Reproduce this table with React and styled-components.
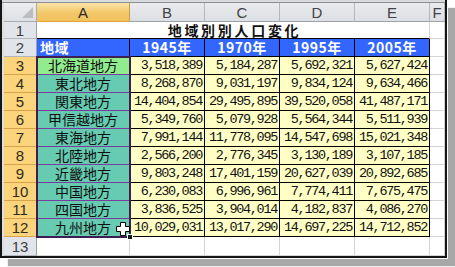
import React from "react";
import styled, { createGlobalStyle, css } from "styled-components";

const Global = createGlobalStyle`
  html, body { margin: 0; padding: 0; background: #fff; }
  #root { width: 455px; height: 267px; overflow: hidden; }
`;

const Shadow = styled.div`
  width: 447px;
  height: 258px;
  box-sizing: border-box;
  box-shadow: 1px 1px 0 #fff, 8px 8px 1px #a8a8a8;
  background: #fff;
  border-left: 2px solid #141414;
  border-right: 2px solid #141414;
  border-bottom: 2px solid #141414;
  display: flex;
  flex-direction: column;
`;

const TopStrip = styled.div`
  height: 2px;
  background: #d8dadd;
  border-bottom: 1px solid #8c8f94;
`;

const Body = styled.div`
  display: flex;
  flex: 1;
`;

const Gutter = styled.div`
  width: 2px;
  background: #dcdee2;
`;

const Sheet = styled.div`
  position: relative;
  display: grid;
  grid-template-columns: 33px 93px 75px 75px 75px 75px 15px;
  grid-template-rows: 19px 17px 18px repeat(10, 18px) 19px;
  font-family: "Noto Sans CJK JP", "Liberation Sans", sans-serif;
`;

const cellBase = css`
  box-sizing: border-box;
  border-right: 1px solid ${(p) => p.$br || "#d4d4d4"};
  border-bottom: 1px solid ${(p) => p.$bb || "#d4d4d4"};
  display: flex;
  align-items: center;
  white-space: nowrap;
  line-height: 15px;
  min-width: 0;
`;

const Corner = styled.div`
  ${cellBase};
  position: relative;
  background: linear-gradient(#eceef1, #dde0e4);
  border-color: #a9adb3;
  &::after {
    content: "";
    position: absolute;
    right: 3px;
    bottom: 3px;
    width: 0;
    height: 0;
    border-left: 11px solid transparent;
    border-bottom: 11px solid #b9bcc1;
  }
`;

const ColHeader = styled.div`
  ${cellBase};
  justify-content: center;
  font-family: "Liberation Sans", "DejaVu Sans", sans-serif;
  font-size: 15px;
  color: ${(p) => (p.$active ? "#2a2a2a" : "#404347")};
  border-right-color: ${(p) => (p.$active ? "#c9a04f" : "#b3b7bd")};
  border-bottom-color: ${(p) => (p.$active ? "#e1a43a" : "#9da2a9")};
  background: ${(p) =>
    p.$active
      ? "linear-gradient(#f9e3a6, #f3c869 55%, #f1c15c)"
      : "linear-gradient(#e9ebee, #dcdfe3)"};
`;

const RowHeader = styled.div`
  ${cellBase};
  justify-content: center;
  font-family: "Liberation Sans", "DejaVu Sans", sans-serif;
  font-size: 15px;
  color: ${(p) => (p.$active ? "#2e2a1e" : "#3c3f44")};
  border-right-color: ${(p) => (p.$active ? "#e0a53f" : "#9da2a9")};
  border-bottom-color: ${(p) => (p.$active ? "#d9a14a" : "#b3b7bd")};
  background: ${(p) => (p.$active ? "#fbd47b" : "#e1e4e8")};
`;

const Title = styled.div`
  ${cellBase};
  grid-column: span 5;
  justify-content: center;
  font-weight: 700;
  font-size: 14px;
  letter-spacing: 2.7px;
  padding-left: 3px;
  color: #111;
  background: #fff;
`;

const Blank = styled.div`
  ${cellBase};
  background: #fff;
`;

const BlueHead = styled.div`
  ${cellBase};
  justify-content: ${(p) => (p.$left ? "flex-start" : "center")};
  padding-left: ${(p) => (p.$left ? "3px" : "0")};
  background: #3366ff;
  color: #fff;
  font-weight: 700;
  font-size: 14px;
  letter-spacing: 0.5px;
`;

const Region = styled.div`
  ${cellBase};
  justify-content: center;
  font-size: 14px;
  color: #111;
  background: ${(p) => (p.$active ? "#90ec8c" : "#66cbb0")};
`;

const Num = styled.div`
  ${cellBase};
  justify-content: flex-end;
  padding-right: 2px;
  background: #ffffc6;
  color: #111;
  font-family: "Liberation Mono", "DejaVu Sans Mono", monospace;
  font-size: 13.5px;
  letter-spacing: -1.3px;
`;

const Selection = styled.div`
  position: absolute;
  grid-column: 2 / 3;
  grid-row: 4 / 14;
  inset: -1px -1px -1px -1px;
  border: 2px solid #3e1d52;
  pointer-events: none;
`;

const FillHandle = styled.div`
  position: absolute;
  right: -4px;
  bottom: -4px;
  width: 4px;
  height: 4px;
  background: #1a1a1a;
  border: 1px solid #fff;
`;

const Cursor = styled.svg`
  position: absolute;
  right: -1px;
  bottom: 0px;
  width: 14px;
  height: 14px;
`;

const years = ["1945年", "1970年", "1995年", "2005年"];

const rows = [
  ["北海道地方", "3,518,389", "5,184,287", "5,692,321", "5,627,424"],
  ["東北地方", "8,268,870", "9,031,197", "9,834,124", "9,634,466"],
  ["関東地方", "14,404,854", "29,495,895", "39,520,058", "41,487,171"],
  ["甲信越地方", "5,349,760", "5,079,928", "5,564,344", "5,511,939"],
  ["東海地方", "7,991,144", "11,778,095", "14,547,698", "15,021,348"],
  ["北陸地方", "2,566,200", "2,776,345", "3,130,189", "3,107,185"],
  ["近畿地方", "9,803,248", "17,401,159", "20,627,039", "20,892,685"],
  ["中国地方", "6,230,083", "6,996,961", "7,774,411", "7,675,475"],
  ["四国地方", "3,836,525", "3,904,014", "4,182,837", "4,086,270"],
  ["九州地方", "10,029,031", "13,017,290", "14,697,225", "14,712,852"],
];

export default function App() {
  return (
    <>
      <Global />
      <Shadow>
        <TopStrip />
        <Body>
          <Gutter />
          <Sheet>
            <Corner />
            {["A", "B", "C", "D", "E", "F"].map((c) => (
              <ColHeader key={c} $active={c === "A"}>
                {c}
              </ColHeader>
            ))}

            <RowHeader>1</RowHeader>
            <Title $bb="#000" $br="#d4d4d4">地域別別人口変化</Title>
            <Blank />

            <RowHeader>2</RowHeader>
            <BlueHead $left $br="#000" $bb="#000">地域</BlueHead>
            {years.map((y) => (
              <BlueHead key={y} $br="#000" $bb="#000">
                {y}
              </BlueHead>
            ))}
            <Blank />

            {rows.map((r, i) => (
              <React.Fragment key={r[0]}>
                <RowHeader $active>{i + 3}</RowHeader>
                <Region $active={i === 0} $br="#000" $bb="#7a3c9c">
                  {r[0]}
                </Region>
                {r.slice(1).map((v, j) => (
                  <Num key={j} $br="#000" $bb="#000">
                    {v}
                  </Num>
                ))}
                <Blank />
              </React.Fragment>
            ))}

            <RowHeader>13</RowHeader>
            {[0, 1, 2, 3, 4, 5].map((k) => (
              <Blank key={k} />
            ))}

            <Selection>
              <Cursor viewBox="0 0 14 14">
                <path
                  d="M4.5 0.5h5v4h4v5h-4v4h-5v-4h-4v-5h4z"
                  fill="#fff"
                  stroke="#000"
                  strokeWidth="1"
                />
              </Cursor>
              <FillHandle />
            </Selection>
          </Sheet>
        </Body>
      </Shadow>
    </>
  );
}
